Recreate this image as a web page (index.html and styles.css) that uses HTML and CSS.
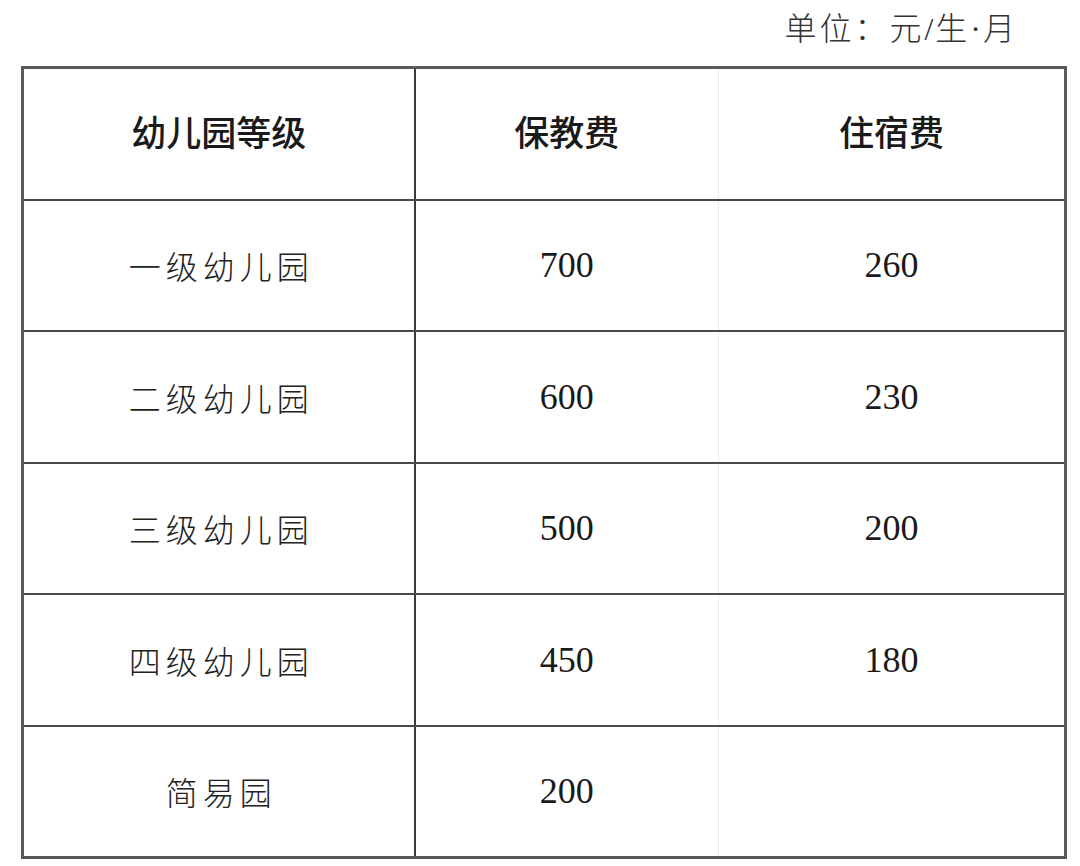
FILE: index.html
```html
<!DOCTYPE html>
<html lang="zh-CN">
<head>
<meta charset="utf-8">
<title>幼儿园收费标准</title>
<link rel="stylesheet" href="styles.css">
</head>
<body>
<div class="page">
  <div class="unit">单位：元<span class="narrow">/</span>生<span class="narrow">·</span>月</div>
  <table class="fees">
    <colgroup>
      <col class="c1">
      <col class="c2">
      <col class="c3">
    </colgroup>
    <thead>
      <tr>
        <th class="k">幼儿园等级</th>
        <th class="a">保教费</th>
        <th class="b">住宿费</th>
      </tr>
    </thead>
    <tbody>
      <tr><td class="k">一级幼儿园</td><td class="a num">700</td><td class="b num">260</td></tr>
      <tr><td class="k">二级幼儿园</td><td class="a num">600</td><td class="b num">230</td></tr>
      <tr><td class="k">三级幼儿园</td><td class="a num">500</td><td class="b num">200</td></tr>
      <tr><td class="k">四级幼儿园</td><td class="a num">450</td><td class="b num">180</td></tr>
      <tr><td class="k">简易园</td><td class="a num">200</td><td class="b num"></td></tr>
    </tbody>
  </table>
</div>
</body>
</html>
```

FILE: styles.css
```css
html, body {
  margin: 0;
  padding: 0;
  background: #ffffff;
}

.page {
  width: 1080px;
  height: 866px;
  overflow: hidden;
  font-family: "Noto Sans CJK SC", "Noto Sans", sans-serif;
  color: #222;
}

.unit {
  height: 66px;
  box-sizing: border-box;
  padding: 4px 62px 0 0;
  text-align: right;
  font-size: 32px;
  line-height: 44px;
  letter-spacing: 3px;
  font-weight: 300;
  color: #333;
}

.unit .narrow {
  font-family: "Liberation Serif", "Times New Roman", serif;
  letter-spacing: 2px;
}

.fees {
  margin-left: 21px;
  width: 1043px;
  table-layout: fixed;
  border-collapse: collapse;
}

.c1 { width: 392px; }
.c2 { width: 304px; }
.c3 { width: 347px; }

.fees th,
.fees td {
  height: 129.5px;
  padding: 0;
  text-align: center;
  vertical-align: middle;
  border-top: 2px solid #4a4a4a;
  border-bottom: 2px solid #4a4a4a;
}

.fees th {
  height: 123.5px;
  padding-bottom: 6px;
  font-size: 35px;
  font-weight: 500;
  color: #1a1a1a;
  letter-spacing: 0;
}

.fees td.k {
  font-size: 32px;
  font-weight: 300;
  letter-spacing: 5px;
  text-indent: 5px;
  color: #222;
}

.fees td.num {
  font-family: "Liberation Serif", "Times New Roman", serif;
  font-size: 36px;
  color: #1a1a1a;
}

.fees .k {
  border-left: 3px solid #5a5a5a;
  border-right: 2px solid #3a3a3a;
}

.fees .a {
  border-right: 1px solid #ececec;
}

.fees .b {
  border-left: 1px solid #ececec;
  border-right: 3px solid #5a5a5a;
}

.fees thead th {
  border-top: 3px solid #5a5a5a;
}

.fees tbody tr:last-child td {
  border-bottom: 3px solid #5a5a5a;
}
```
